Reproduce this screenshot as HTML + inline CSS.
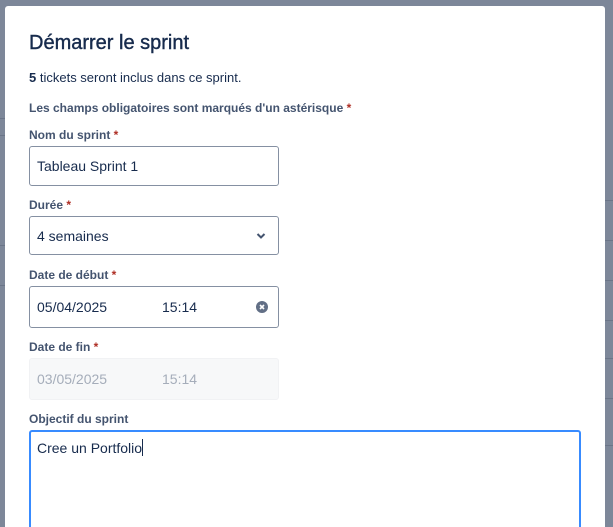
<!DOCTYPE html>
<html style="width:613px;height:527px;overflow:hidden"><head><meta charset="utf-8"><style>
*{box-sizing:border-box;margin:0;padding:0}
body{width:613px;height:527px;overflow:hidden;background:#7d8799;font-family:"Liberation Sans",sans-serif;position:relative;color:#172b4d}
.bgline{position:absolute;left:0;width:5px;height:1px;background:#6b7588}
.rbg{position:absolute;left:605px;width:8px;height:1px;background:#6b7588}
.modal{position:absolute;left:5px;top:6px;width:600px;height:521px;background:#fff;border-radius:3px 3px 0 0;overflow:hidden}
.a{position:absolute}
h1{position:absolute;left:24px;top:26px;font-size:20px;font-weight:normal;color:#172b4d;-webkit-text-stroke:0.4px #172b4d}
.t{font-size:13px;color:#172b4d}
.lb{font-size:12px;font-weight:bold;color:#44546f}
.req{color:#ae2e24}
.inp{position:absolute;left:24px;width:250px;height:40px;border:1px solid #8590a2;border-radius:3px;font-size:14px;padding:0 7px;line-height:38px;color:#172b4d}
.dis{background:#f7f8f9;border-color:#f1f2f4;color:#a5adba}
</style></head><body>
<div class="bgline" style="top:118px"></div><div class="bgline" style="top:135px"></div>
<div class="bgline" style="top:245px"></div><div class="bgline" style="top:285px"></div>
<div class="rbg" style="top:200px"></div><div class="rbg" style="top:240px"></div><div class="rbg" style="top:280px"></div><div class="rbg" style="top:320px"></div><div class="rbg" style="top:358px"></div><div class="rbg" style="top:398px"></div><div class="rbg" style="top:445px"></div>
<div class="modal">
<h1>Démarrer le sprint</h1>
<div class="a t" style="left:24px;top:64px"><b>5</b> tickets seront inclus dans ce sprint.</div>
<div class="a lb" style="left:24px;top:95px">Les champs obligatoires sont marqués d'un astérisque <span class="req">*</span></div>
<div class="a lb" style="left:24px;top:122px">Nom du sprint<span class="req"> *</span></div>
<div class="inp" style="top:140px">Tableau Sprint 1</div>
<div class="a lb" style="left:24px;top:192px">Durée<span class="req"> *</span></div>
<div class="inp" style="top:210px;height:39px">4 semaines
<svg class="a" style="left:226px;top:15px" width="10" height="8" viewBox="0 0 10 8"><path d="M1.5 2 L5 5.5 L8.5 2" stroke="#44546f" stroke-width="2" fill="none"/></svg></div>
<div class="a lb" style="left:24px;top:262px">Date de début<span class="req"> *</span></div>
<div class="inp" style="top:280px;height:42px;line-height:40px">05/04/2025<span style="position:absolute;left:132px">15:14</span>
<svg class="a" style="left:226px;top:14px" width="12" height="12" viewBox="0 0 12 12"><circle cx="6" cy="6" r="6" fill="#626f86"/><path d="M4 4 L8 8 M8 4 L4 8" stroke="#fff" stroke-width="1.6"/></svg></div>
<div class="a lb" style="left:24px;top:334px">Date de fin<span class="req"> *</span></div>
<div class="inp dis" style="top:352px;height:42px;line-height:40px">03/05/2025<span style="position:absolute;left:132px">15:14</span></div>
<div class="a lb" style="left:24px;top:406px">Objectif du sprint</div>
<div class="a" style="left:24px;top:424px;width:552px;height:120px;border:2px solid #388bff;border-radius:3px;font-size:14px;padding:7px 6px;color:#172b4d">Cree un Portfolio<span style="display:inline-block;width:1px;height:17px;background:#172b4d;vertical-align:-3px"></span></div>
</div>
</body></html>
